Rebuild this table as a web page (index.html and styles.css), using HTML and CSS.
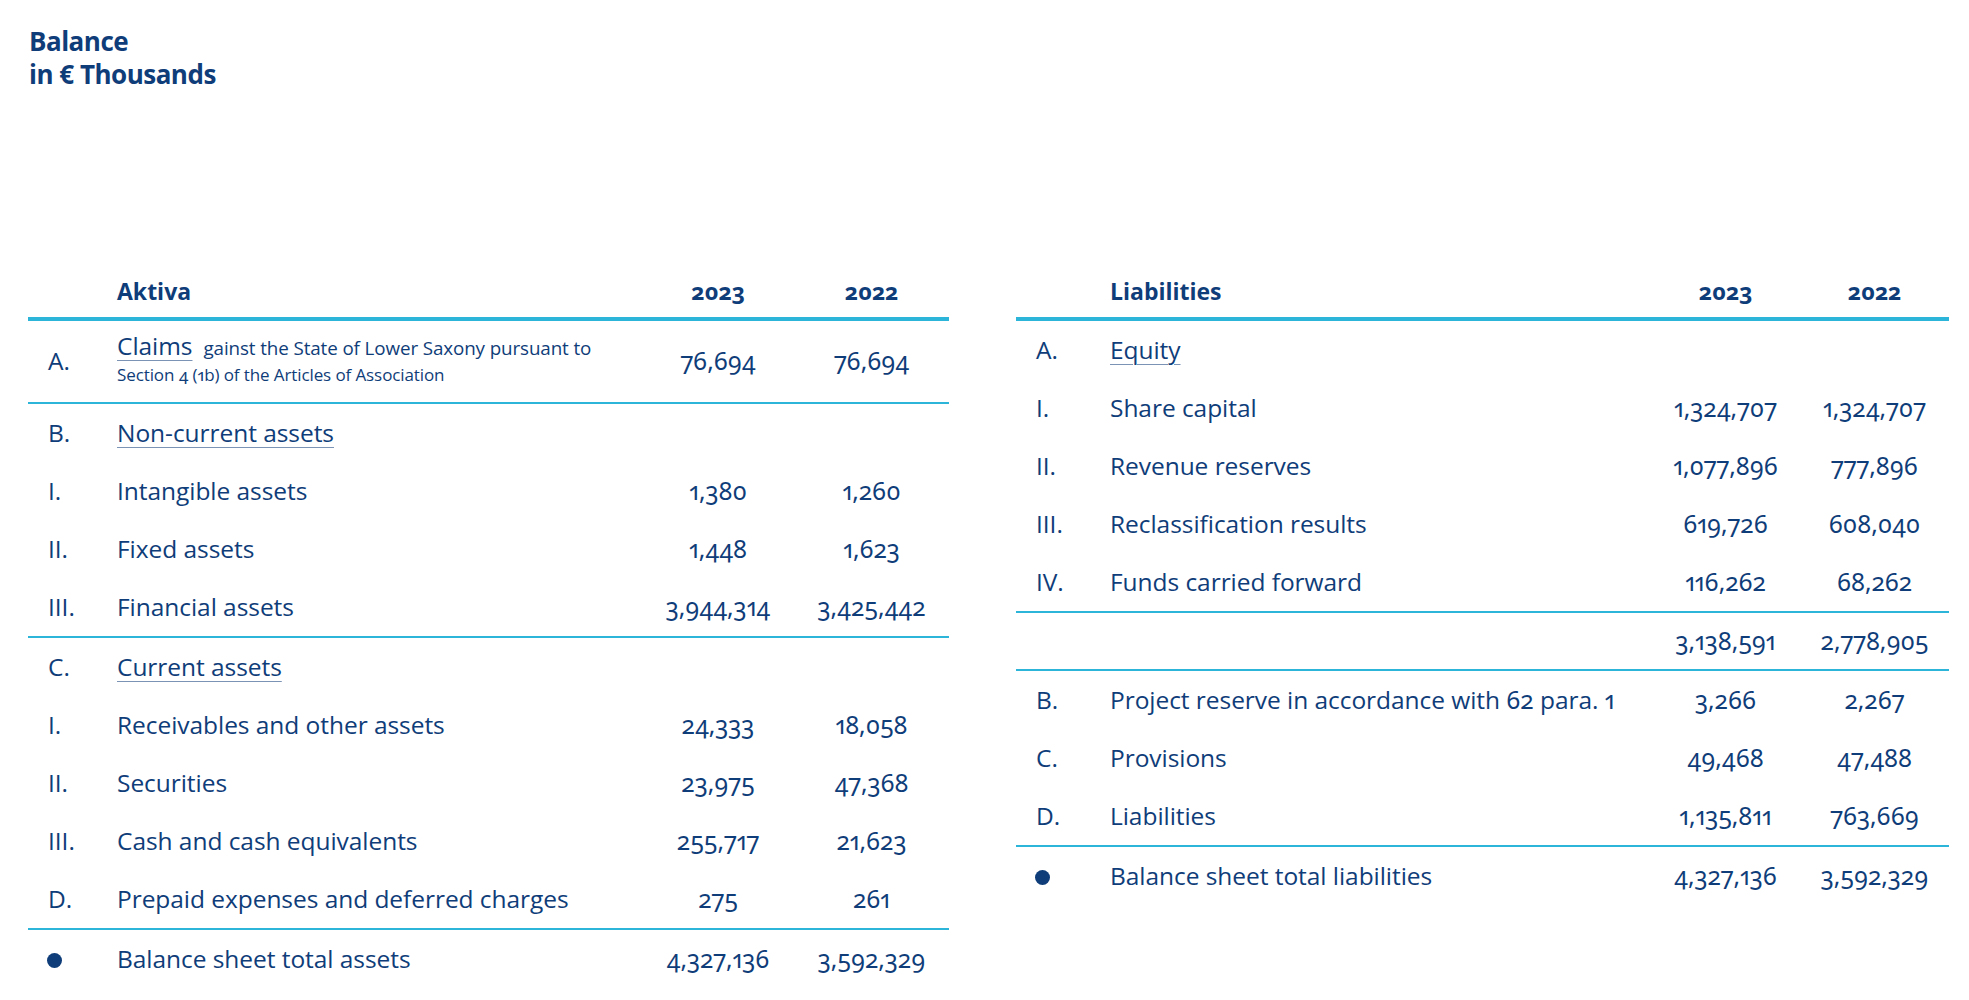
FILE: index.html
```html
<!DOCTYPE html>
<html lang="en">
<head>
<meta charset="utf-8">
<title>Balance in € Thousands</title>
<link rel="stylesheet" href="styles.css">
</head>
<body>
<main class="page">
  <h1 class="title">Balance<br>in € Thousands</h1>
  <div class="sheets">
    <section class="sheet sheet-left">
      <div class="row head"><span class="key"></span><span class="label">Aktiva</span><span class="num">2023</span><span class="num">2022</span></div>
      <div class="row tall rule">
        <span class="key">A.</span>
        <span class="label claims">
          <span class="cline"><span class="ul">Claims</span><span class="small wide gap">gainst the State of Lower Saxony pursuant to</span></span>
          <span class="cline"><span class="small">Section <span class="fig">4</span> (<span class="fig">1</span>b) of the Articles of Association</span></span>
        </span>
        <span class="num">76,694</span><span class="num">76,694</span>
      </div>
      <div class="row"><span class="key">B.</span><span class="label"><span class="ul">Non-current assets</span></span><span class="num"></span><span class="num"></span></div>
      <div class="row"><span class="key">I.</span><span class="label">Intangible assets</span><span class="num">1,380</span><span class="num">1,260</span></div>
      <div class="row"><span class="key">II.</span><span class="label">Fixed assets</span><span class="num">1,448</span><span class="num">1,623</span></div>
      <div class="row rule"><span class="key">III.</span><span class="label">Financial assets</span><span class="num">3,944,314</span><span class="num">3,425,442</span></div>
      <div class="row"><span class="key">C.</span><span class="label"><span class="ul">Current assets</span></span><span class="num"></span><span class="num"></span></div>
      <div class="row"><span class="key">I.</span><span class="label">Receivables and other assets</span><span class="num">24,333</span><span class="num">18,058</span></div>
      <div class="row"><span class="key">II.</span><span class="label">Securities</span><span class="num">23,975</span><span class="num">47,368</span></div>
      <div class="row"><span class="key">III.</span><span class="label">Cash and cash equivalents</span><span class="num">255,717</span><span class="num">21,623</span></div>
      <div class="row rule"><span class="key">D.</span><span class="label">Prepaid expenses and deferred charges</span><span class="num">275</span><span class="num">261</span></div>
      <div class="row"><span class="key"><span class="dot"></span></span><span class="label">Balance sheet total assets</span><span class="num">4,327,136</span><span class="num">3,592,329</span></div>
    </section>

    <section class="sheet sheet-right">
      <div class="row head"><span class="key"></span><span class="label">Liabilities</span><span class="num">2023</span><span class="num">2022</span></div>
      <div class="row"><span class="key">A.</span><span class="label"><span class="ul">Equity</span></span><span class="num"></span><span class="num"></span></div>
      <div class="row"><span class="key">I.</span><span class="label">Share capital</span><span class="num">1,324,707</span><span class="num">1,324,707</span></div>
      <div class="row"><span class="key">II.</span><span class="label">Revenue reserves</span><span class="num">1,077,896</span><span class="num">777,896</span></div>
      <div class="row"><span class="key">III.</span><span class="label">Reclassification results</span><span class="num">619,726</span><span class="num">608,040</span></div>
      <div class="row rule"><span class="key">IV.</span><span class="label">Funds carried forward</span><span class="num">116,262</span><span class="num">68,262</span></div>
      <div class="row sub rule"><span class="key"></span><span class="label"></span><span class="num">3,138,591</span><span class="num">2,778,905</span></div>
      <div class="row"><span class="key">B.</span><span class="label">Project reserve in accordance with <span class="fig">62</span> para. <span class="fig">1</span></span><span class="num">3,266</span><span class="num">2,267</span></div>
      <div class="row"><span class="key">C.</span><span class="label">Provisions</span><span class="num">49,468</span><span class="num">47,488</span></div>
      <div class="row rule"><span class="key">D.</span><span class="label">Liabilities</span><span class="num">1,135,811</span><span class="num">763,669</span></div>
      <div class="row"><span class="key"><span class="dot"></span></span><span class="label">Balance sheet total liabilities</span><span class="num">4,327,136</span><span class="num">3,592,329</span></div>
    </section>
  </div>
</main>
</body>
</html>
```
FILE: styles.css
```css
body {
  margin: 0;
  background: #ffffff;
  color: #0f3d79;
  font-family: "Open Sans", "Noto Sans", sans-serif;
}

.page {
  padding: 25px 20px 0 28px;
}

.title {
  margin: 0;
  padding-left: 1px;
  font-size: 26px;
  line-height: 33px;
  font-weight: 700;
  letter-spacing: -0.5px;
}

.sheets {
  display: flex;
  gap: 67px;
  margin-top: 171px;
}

.sheet-left {
  width: 921px;
}

.sheet-right {
  width: 933px;
}

.row {
  display: grid;
  height: 56px;
  padding-bottom: 2px;
  align-items: center;
  font-size: 24.5px;
  letter-spacing: -0.05px;
  white-space: nowrap;
}

.sheet-left .row {
  grid-template-columns: 89px 1fr 152px 155px;
}

.sheet-right .row {
  grid-template-columns: 94px 1fr 149px 149px;
}

.row.rule {
  border-bottom: 2px solid #2cb5d9;
}

.row.head {
  height: 52px;
  padding-top: 3px;
  padding-bottom: 0;
  border-bottom: 4px solid #2cb5d9;
  font-weight: 700;
  font-size: 23px;
  letter-spacing: 0;
}

.row.tall {
  height: 79px;
}

.row.sub {
  height: 54px;
}

.key {
  padding-left: 20px;
  display: flex;
  align-items: center;
}

.num,
.fig {
  font-family: "Noto Sans", "Open Sans", sans-serif;
  font-variant-numeric: oldstyle-nums proportional-nums;
  font-feature-settings: "onum" 1, "pnum" 1;
}

.num {
  text-align: center;
}

.ul {
  text-decoration: underline;
  text-decoration-thickness: 1px;
  text-underline-offset: 5px;
  text-decoration-color: rgba(15, 61, 121, 0.55);
}

.claims {
  display: flex;
  flex-direction: column;
  line-height: 24px;
}

.small {
  font-size: 17px;
  letter-spacing: -0.1px;
}

.small.wide {
  font-size: 18.8px;
}

.gap {
  margin-left: 11px;
}

.dot {
  display: block;
  width: 15px;
  height: 15px;
  border-radius: 50%;
  background: #0f3d79;
  margin-left: -1px;
  margin-top: 4px;
}
```
